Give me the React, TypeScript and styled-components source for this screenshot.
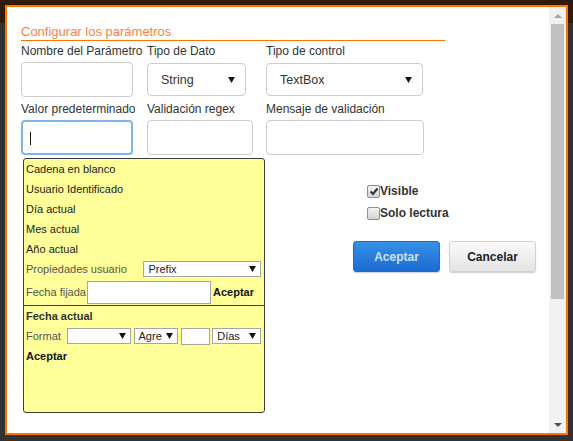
import styled, { createGlobalStyle } from "styled-components";

const GlobalStyle = createGlobalStyle`
  html, body {
    margin: 0;
    padding: 0;
  }
  body {
    background: #323232;
    font-family: "Liberation Sans", Arial, sans-serif;
  }
`;

const Backdrop = styled.div`
  width: 573px;
  height: 441px;
  box-sizing: border-box;
  padding: 5px 0 0 5px;
  overflow: hidden;
  background: linear-gradient(to bottom, #2f1a0b 0, #2f1a0b 23px, #323232 23px);
`;

const Dialog = styled.div`
  width: 563px;
  height: 430px;
  box-sizing: border-box;
  border: 2px solid #ff7300;
  background: #fff;
  display: flex;
`;

const Body = styled.div`
  flex: 1;
  box-sizing: border-box;
  padding: 17px 0 0 14px;
`;

const Title = styled.h3`
  margin: 0;
  width: 424px;
  font-size: 13px;
  line-height: 16px;
  font-weight: normal;
  color: #f9843f;
  border-bottom: 1px solid #ff7400;
`;

const FieldGrid = styled.div`
  margin-top: 3px;
  display: grid;
  grid-template-columns: 126px 119px 1fr;
  row-gap: 5px;
`;

const Field = styled.div`
  position: relative;
  display: flex;
  flex-direction: column;
  align-items: flex-start;
`;

const Label = styled.label`
  font-size: 12px;
  line-height: 14px;
  height: 14px;
  margin-bottom: 4px;
  color: #333;
  white-space: nowrap;
`;

const TextInput = styled.div<{ $width: number; $focused?: boolean }>`
  width: ${(p) => p.$width}px;
  height: 35px;
  box-sizing: border-box;
  border: ${(p) => (p.$focused ? "2px solid #7fb4ec" : "1px solid #ccc")};
  border-radius: 4px;
  background: #fff;
  display: flex;
  align-items: center;
  padding-left: ${(p) => (p.$focused ? 7 : 8)}px;
`;

const Caret = styled.span`
  width: 1px;
  height: 13px;
  margin-top: 2px;
  background: #111;
`;

const SelectBox = styled.div<{ $width: number }>`
  width: ${(p) => p.$width}px;
  height: 33px;
  margin-top: 1px;
  box-sizing: border-box;
  border: 1px solid #ccc;
  border-radius: 4px;
  background: #fff;
  display: flex;
  align-items: center;
  justify-content: space-between;
  padding: 0 10px 0 13px;
  font-size: 12.5px;
  color: #333;
`;

const Arrow = ({ size = 7, color = "#111" }: { size?: number; color?: string }) => (
  <svg width={size} height={size - 1} viewBox="0 0 8 7">
    <polygon points="0,0 8,0 4,7" fill={color} />
  </svg>
);

/* dropdown of default values */
const Panel = styled.div`
  position: absolute;
  top: calc(100% + 3px);
  left: 2px;
  z-index: 2;
  width: 242px;
  height: 255px;
  box-sizing: border-box;
  background: #ffff99;
  border: 1px solid #3c3c3c;
  border-radius: 3px;
  font-size: 11px;
  display: flex;
  flex-direction: column;
`;

const PanelItem = styled.div<{ $bold?: boolean; $height?: number }>`
  height: ${(p) => p.$height ?? 20}px;
  padding-left: 2px;
  display: flex;
  align-items: center;
  white-space: nowrap;
  color: ${(p) => (p.$bold ? "#333" : "#222")};
  font-weight: ${(p) => (p.$bold ? "bold" : "normal")};
`;

const PanelSection = styled.div`
  border-top: 1px solid #3c3c3c;
`;

const RowLabel = styled.span<{ $width: number }>`
  width: ${(p) => p.$width}px;
  color: #555;
`;

const MiniSelect = styled.div<{ $width: number }>`
  width: ${(p) => p.$width}px;
  height: 16px;
  box-sizing: border-box;
  border: 1px solid #a5a5a5;
  background: #fff;
  display: flex;
  align-items: center;
  justify-content: space-between;
  padding: 0 4px;
  margin-right: 3px;
  color: #222;
  font-size: 11px;
`;

const MiniInput = styled.div<{ $width: number; $height: number }>`
  width: ${(p) => p.$width}px;
  height: ${(p) => p.$height}px;
  box-sizing: border-box;
  border: 1px solid #a5a5a5;
  background: #fff;
  margin-right: 2px;
`;

const BoldText = styled.span`
  font-weight: bold;
  color: #111;
`;

const Lower = styled.div`
  margin-top: 25px;
  padding-left: 332px;
`;

const CheckRow = styled.div`
  height: 22px;
  padding-left: 14px;
  display: flex;
  align-items: center;
  font-size: 12px;
  font-weight: bold;
  color: #333;
`;

const CheckBox = styled.span`
  width: 13px;
  height: 13px;
  box-sizing: border-box;
  border: 1px solid #8e8e8e;
  border-radius: 2px;
  background: linear-gradient(#f2f2f2, #d4d4d4);
  display: flex;
  align-items: center;
  justify-content: center;
`;

const Buttons = styled.div`
  margin-top: 17px;
  display: flex;
  gap: 9px;
`;

const Button = styled.button<{ $primary?: boolean }>`
  width: 87px;
  height: 31px;
  box-sizing: border-box;
  border-radius: 3px;
  font-family: "Liberation Sans", Arial, sans-serif;
  font-size: 12px;
  font-weight: bold;
  cursor: pointer;
  border: 1px solid ${(p) => (p.$primary ? "#1f6cc9" : "#d2d2d2")};
  background: ${(p) =>
    p.$primary ? "linear-gradient(#3590e6, #1d6bd0)" : "linear-gradient(#fafafa, #e3e3e3)"};
  color: ${(p) => (p.$primary ? "#cfe1f7" : "#222")};
  box-shadow: 0 1px 1px rgba(0, 0, 0, 0.18);
`;

const Scrollbar = styled.div`
  width: 17px;
  background: #f1f1f1;
  display: flex;
  flex-direction: column;
  align-items: center;
`;

const ScrollArrow = styled.div`
  width: 17px;
  height: 17px;
  display: flex;
  align-items: center;
  justify-content: center;
`;

const Thumb = styled.div`
  width: 13px;
  height: 275px;
  background: #c1c1c1;
`;

const Spacer = styled.div`
  flex: 1;
`;

const options = ["Cadena en blanco", "Usuario Identificado", "Día actual", "Mes actual", "Año actual"];

export default function App() {
  return (
    <>
      <GlobalStyle />
      <Backdrop>
        <Dialog>
          <Body>
            <Title>Configurar los parámetros</Title>
            <FieldGrid>
              <Field>
                <Label>Nombre del Parámetro</Label>
                <TextInput $width={112} />
              </Field>
              <Field>
                <Label>Tipo de Dato</Label>
                <SelectBox $width={99}>
                  String
                  <Arrow />
                </SelectBox>
              </Field>
              <Field>
                <Label>Tipo de control</Label>
                <SelectBox $width={157}>
                  TextBox
                  <Arrow />
                </SelectBox>
              </Field>

              <Field>
                <Label>Valor predeterminado</Label>
                <TextInput $width={112} $focused>
                  <Caret />
                </TextInput>
                <Panel>
                  {options.map((o) => (
                    <PanelItem key={o}>{o}</PanelItem>
                  ))}
                  <PanelItem>
                    <RowLabel $width={118}>Propiedades usuario</RowLabel>
                    <MiniSelect $width={118}>
                      Prefix
                      <Arrow />
                    </MiniSelect>
                  </PanelItem>
                  <PanelItem $height={26}>
                    <RowLabel $width={61}>Fecha fijada</RowLabel>
                    <MiniInput $width={124} $height={23} />
                    <BoldText>Aceptar</BoldText>
                  </PanelItem>
                  <PanelSection>
                    <PanelItem $bold>Fecha actual</PanelItem>
                    <PanelItem>
                      <RowLabel $width={41}>Format</RowLabel>
                      <MiniSelect $width={64}>
                        <span />
                        <Arrow />
                      </MiniSelect>
                      <MiniSelect $width={45}>
                        Agre
                        <Arrow />
                      </MiniSelect>
                      <MiniInput $width={29} $height={17} />
                      <MiniSelect $width={49}>
                        Días
                        <Arrow />
                      </MiniSelect>
                    </PanelItem>
                    <PanelItem $bold>
                      <BoldText>Aceptar</BoldText>
                    </PanelItem>
                  </PanelSection>
                </Panel>
              </Field>
              <Field>
                <Label>Validación regex</Label>
                <TextInput $width={106} />
              </Field>
              <Field>
                <Label>Mensaje de validación</Label>
                <TextInput $width={158} />
              </Field>
            </FieldGrid>

            <Lower>
              <CheckRow>
                <CheckBox>
                  <svg width="10" height="9" viewBox="0 0 10 9">
                    <path d="M1.5 4.5 L4 7 L8.5 1.5" stroke="#333" strokeWidth="2" fill="none" />
                  </svg>
                </CheckBox>
                Visible
              </CheckRow>
              <CheckRow>
                <CheckBox />
                Solo lectura
              </CheckRow>
              <Buttons>
                <Button $primary>Aceptar</Button>
                <Button>Cancelar</Button>
              </Buttons>
            </Lower>
          </Body>

          <Scrollbar>
            <ScrollArrow>
              <svg width="8" height="4" viewBox="0 0 8 4">
                <polygon points="0,4 8,4 4,0" fill="#a3a3a3" />
              </svg>
            </ScrollArrow>
            <Thumb />
            <Spacer />
            <ScrollArrow>
              <svg width="8" height="4" viewBox="0 0 8 4">
                <polygon points="0,0 8,0 4,4" fill="#505050" />
              </svg>
            </ScrollArrow>
          </Scrollbar>
        </Dialog>
      </Backdrop>
    </>
  );
}
